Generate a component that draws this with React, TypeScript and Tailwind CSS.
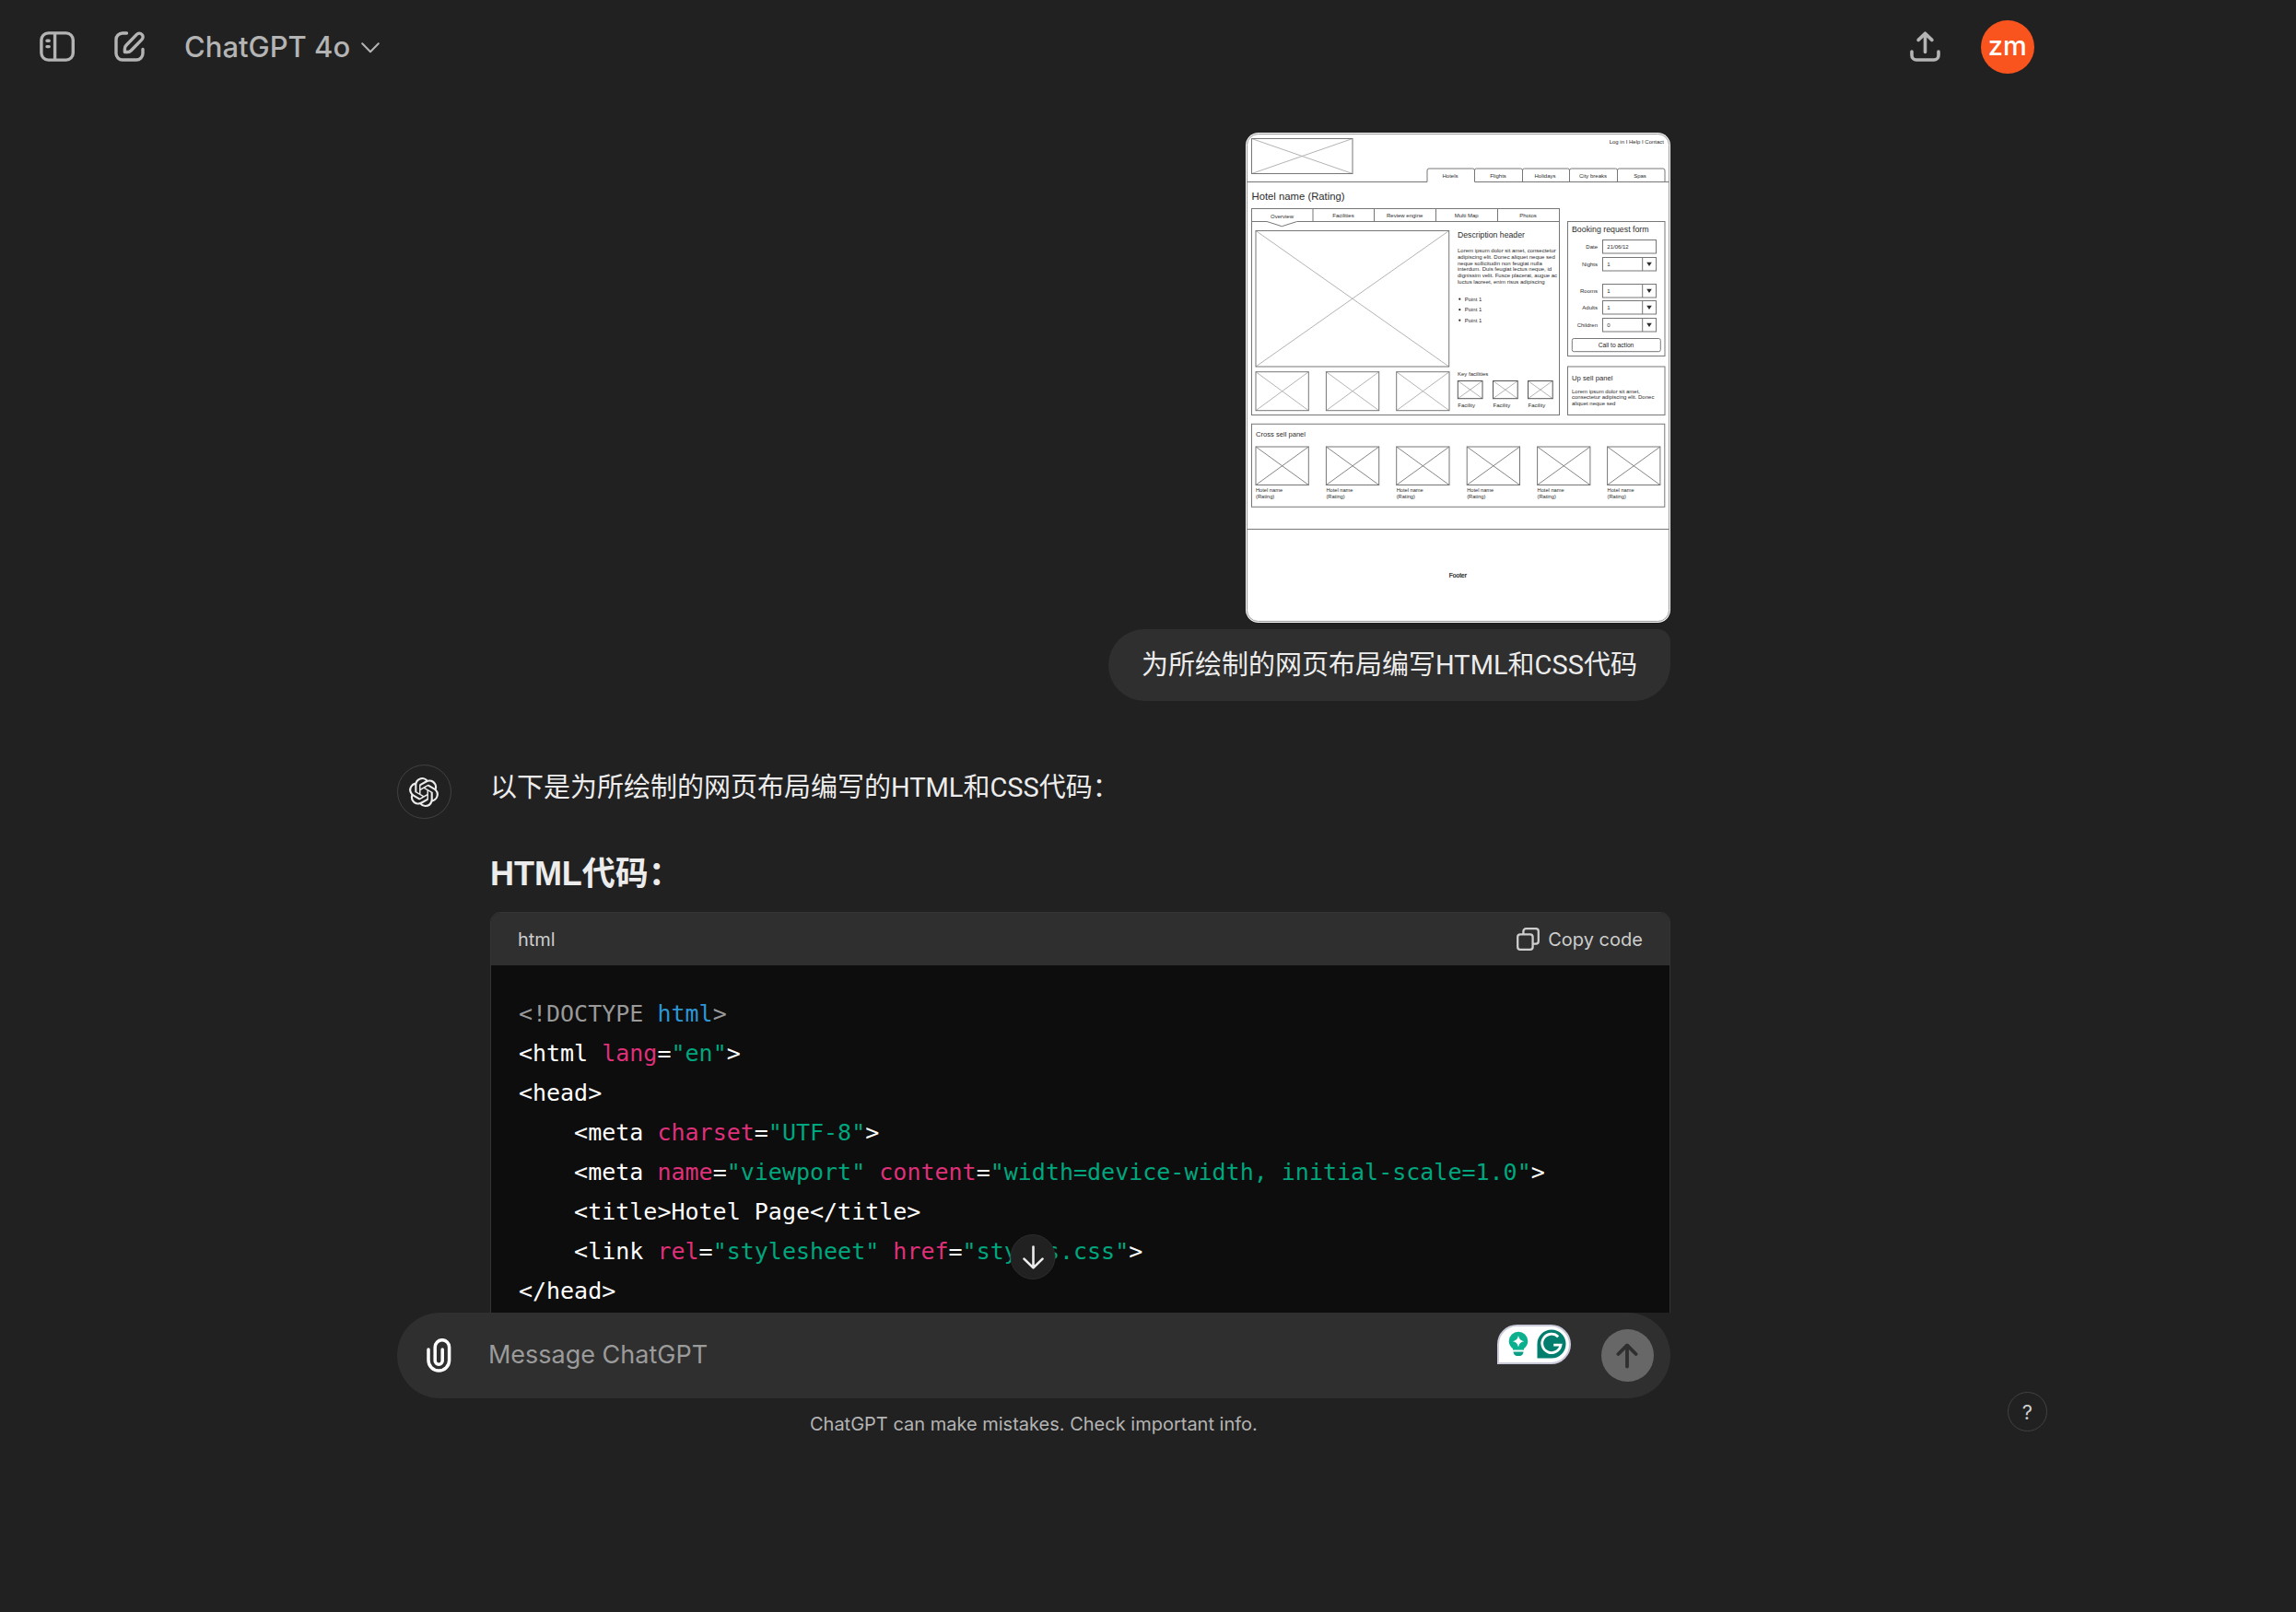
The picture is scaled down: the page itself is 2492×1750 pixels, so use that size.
import type { ReactNode } from "react";
import { SiOpenai } from "react-icons/si";

function SidebarIcon() {
  return (
    <svg width="38" height="33" viewBox="0 0 38 33" fill="none" stroke="currentColor" strokeWidth="3.4" aria-hidden="true">
      <rect x="1.9" y="1.9" width="34.4" height="29.2" rx="7.5" />
      <path d="M16.6 2v29" />
      <path d="M8 10.2h2.2M8 16.6h2.2" strokeLinecap="round" />
    </svg>
  );
}

function NewChatIcon() {
  return (
    <svg width="33" height="33" viewBox="0 0 33 33" fill="none" stroke="currentColor" strokeWidth="3.4" strokeLinecap="round" strokeLinejoin="round" aria-hidden="true">
      <path d="M13.5 2H9a7 7 0 0 0-7 7v15a7 7 0 0 0 7 7h15a7 7 0 0 0 7-7v-4.5" />
      <path d="M11.4 22.5V19c0-1.4.5-2.7 1.5-3.7L24.4 3.4a3.9 3.9 0 0 1 5.6 5.5L18.4 20.8c-1 1-2.3 1.7-3.7 1.7z" />
    </svg>
  );
}

function ChevronIcon() {
  return (
    <svg width="20" height="12" viewBox="0 0 20 12" fill="none" stroke="currentColor" strokeWidth="2" strokeLinecap="round" strokeLinejoin="round" aria-hidden="true">
      <path d="m1.2 1.2 8.8 9 8.8-9" />
    </svg>
  );
}

function ShareIcon() {
  return (
    <svg width="33" height="33" viewBox="0 0 33 33" fill="none" stroke="currentColor" strokeWidth="3.6" strokeLinecap="round" strokeLinejoin="round" aria-hidden="true">
      <path d="M2 22v4a5 5 0 0 0 5 5h19a5 5 0 0 0 5-5v-4" />
      <path d="M16.5 22.5V2.4M9.2 9.4l7.3-7.2 7.3 7.2" />
    </svg>
  );
}

function CopyIcon() {
  return (
    <svg width="25" height="25" viewBox="0 0 25 25" fill="none" stroke="currentColor" strokeWidth="2.3" aria-hidden="true">
      <rect x="1.2" y="7.4" width="16.4" height="16.4" rx="2.8" />
      <path d="M7.4 7V4A2.8 2.8 0 0 1 10.2 1.2H21A2.8 2.8 0 0 1 23.8 4v10.8a2.8 2.8 0 0 1-2.8 2.8h-3" />
    </svg>
  );
}

function ClipIcon() {
  return (
    <svg width="27" height="37" viewBox="0 0 27 37" fill="none" stroke="currentColor" strokeWidth="3.5" strokeLinecap="round" aria-hidden="true">
      <path d="M2 12v11.8a11.3 11.3 0 0 0 22.6 0V9.4a7.7 7.7 0 0 0-15.4 0v14.8a4 4 0 0 0 8 0V12" />
    </svg>
  );
}

function ArrowUpIcon() {
  return (
    <svg width="24" height="28" viewBox="0 0 24 28" fill="none" stroke="currentColor" strokeWidth="3.8" strokeLinecap="round" strokeLinejoin="round" aria-hidden="true">
      <path d="M12 25.6V2.6M2.4 12 12 2.4l9.6 9.6" />
    </svg>
  );
}

function ArrowDownIcon() {
  return (
    <svg width="24" height="26" viewBox="0 0 24 26" fill="none" stroke="currentColor" strokeWidth="2.6" strokeLinecap="round" strokeLinejoin="round" aria-hidden="true">
      <path d="M12 1.5v22.6M2 14.6l10 9.8 10-9.8" />
    </svg>
  );
}

function BulbIcon() {
  return (
    <svg width="22" height="28" viewBox="0 0 22 28" aria-hidden="true">
      <path d="M11 .8A10.3 10.3 0 0 0 .7 11c0 4 2.2 6.3 4.3 8.1v1.5h12v-1.5c2.1-1.8 4.3-4.1 4.3-8.1A10.3 10.3 0 0 0 11 .8z" fill="#0bb08f" />
      <path d="M5.4 22.600h11.200c-.4 2.800-1.900 4.400-3.600 4.400H9c-1.700 0-3.200-1.600-3.600-4.400z" fill="#0b9f86" />
      <path d="M11 4.800c.9 4 2.300 5.500 6.200 6.400-3.900.9-5.300 2.400-6.200 6.400-.9-4-2.300-5.500-6.200-6.400 3.900-.9 5.300-2.400 6.200-6.400z" fill="#fff" />
    </svg>
  );
}

function GrammarBadge() {
  return (
    <svg width="32" height="32" viewBox="0 0 32 32" aria-hidden="true">
      <path d="M16 .5a15.5 15.5 0 1 1 0 31H.5V16A15.5 15.5 0 0 1 16 .5z" fill="#027e6f" />
      <path d="M23.2 8.2A10.2 10.2 0 1 0 26 17.2h-7.800" fill="none" stroke="#fff" strokeWidth="2.8" />
    </svg>
  );
}

function Crossed({ x, y, r, b, line = "#777", diag = "#aaa" }: { x: number; y: number; r: number; b: number; line?: string; diag?: string }) {
  return (
    <g fill="none">
      <path d={`M${x} ${y}L${r} ${b}M${r} ${y}L${x} ${b}`} stroke={diag} strokeWidth="0.9" />
      <rect x={x} y={y} width={r - x} height={b - y} stroke={line} />
    </g>
  );
}

const siteTabs: [string, number][] = [["Hotels", 222], ["Flights", 274], ["Holidays", 325], ["City breaks", 377], ["Spas", 428]];
const pageTabs: [string, number, number][] = [["Overview", 39.5, 92.5], ["Facilities", 106, 91.7], ["Review engine", 172.7, 91.7], ["Multi Map", 239.7, 91.7], ["Photos", 306.5, 91.7]];
const lorem = [
  "Lorem ipsum dolor sit amet, consectetur",
  "adipiscing elit. Donec aliquet neque sed",
  "neque sollicitudin non feugiat nulla",
  "interdum. Duis feugiat lectus neque, id",
  "dignissim velit. Fusce placerat, augue ac",
  "luctus laoreet, enim risus adipiscing",
];
const fields: [string, string, number, boolean][] = [
  ["Date", "21/06/12", 116.5, false],
  ["Nights", "1", 135.5, true],
  ["Rooms", "1", 164.5, true],
  ["Adults", "1", 182.5, true],
  ["Children", "0", 201.5, true],
];
const thumbs = [11, 87.4, 163.7];
const hotels = [11, 87.4, 163.7, 240.2, 316.6, 392.6];

/* Uploaded hotel page wireframe */
function Wireframe() {
  return (
    <svg viewBox="0 0 461 532" className="block w-[461px] rounded-[14px] bg-white" role="img" aria-label="Hotel page wireframe" fontFamily='"Liberation Sans", Arial, sans-serif' fontSize="6" fill="#2c2c2c">
      <g fill="none" stroke="#777">
        <rect x="1.5" y="1.5" width="458" height="529" rx="12" stroke="#999" />
        <path d="M1.5 53.5H197V41q0-2 2-2h47.5q2 0 2 2v12.5h211" />
        <path d="M248.5 41q0-2 2-2h48q2 0 2 2v12.500M300.500 41q0-2 2-2h47q2 0 2 2v12.500M351.500 41q0-2 2-2h48q2 0 2 2v12.500M403.500 41q0-2 2-2H453q2 0 2 2v12.500" />
        <rect x="6.5" y="82.5" width="334" height="224" />
        <path d="M6.5 96.5H23l16.300 5.200 16.400-5.200h284.800M73 82.500v14M139.500 82.500v14M206.500 82.500v14M273.500 82.500v14" />
        <rect x="349.5" y="96.5" width="105.5" height="146" />
        <rect x="354.3" y="223.5" width="96" height="14.2" rx="2" />
        <rect x="349.5" y="254" width="105.5" height="52.5" />
        <rect x="6.5" y="316.3" width="448.3" height="90" />
        <path d="M1.5 430.5h458" />
      </g>

      <Crossed x={6.5} y={6.5} r={116} b={44.5} />
      <text x="454" y="12" textAnchor="end">Log in I Help I Contact</text>
      {siteTabs.map(([label, x]) => (
        <text key={label} x={x} y="48.7" textAnchor="middle">{label}</text>
      ))}
      <text x="6.5" y="72.5" fontSize="11.3">Hotel name (Rating)</text>
      {pageTabs.map(([label, x, y]) => (
        <text key={label} x={x} y={y} textAnchor="middle">{label}</text>
      ))}

      <Crossed x={11} y={106.5} r={220.7} b={254} />
      {thumbs.map((x) => (
        <Crossed key={x} x={x} y={259.7} r={x + 57.3} b={301.7} />
      ))}
      <text x="230" y="114.3" fontSize="8.7">Description header</text>
      {lorem.map((line, i) => (
        <text key={line} x="230" y={130.4 + i * 6.66}>{line}</text>
      ))}
      {[182.7, 194.2, 205.7].map((y) => (
        <g key={y}>
          <circle cx="232.3" cy={y - 2} r="1.1" />
          <text x="237.7" y={y}>Point 1</text>
        </g>
      ))}
      <text x="230" y="264.2">Key facilities</text>
      {[230.3, 268.5, 306.5].map((x) => (
        <g key={x}>
          <Crossed x={x} y={269.5} r={x + 26.7} b={288.7} line="#555" />
          <text x={x} y="297.5">Facility</text>
        </g>
      ))}

      <text x="354" y="107.8" fontSize="8.8">Booking request form</text>
      {fields.map(([label, value, y, dropdown]) => (
        <g key={label}>
          <text x="382" y={y + 9.3} textAnchor="end">{label}</text>
          <rect x="387.5" y={y} width="58" height="14.5" fill="none" stroke="#777" />
          <text x="392.3" y={y + 9}>{value}</text>
          {dropdown && <path d={`M430.7 ${y}v14.5`} stroke="#777" />}
          {dropdown && <path d={`M435.2 ${y + 5.2}h5.6l-2.8 4.2z`} />}
        </g>
      ))}
      <text x="402" y="232.8" textAnchor="middle" fontSize="6.7" fill="#222">Call to action</text>
      <text x="354" y="269.4" fontSize="7.7">Up sell panel</text>
      <text x="354" y="282.7">Lorem ipsum dolor sit amet,</text>
      <text x="354" y="289.4">consectetur adipiscing elit. Donec</text>
      <text x="354" y="296">aliquet neque sed</text>

      <text x="11" y="329.7" fontSize="7.6">Cross sell panel</text>
      {hotels.map((x) => (
        <g key={x}>
          <Crossed x={x} y={341} r={x + 57.3} b={382.5} diag="#777" />
          <text x={x} y="390.2" fontSize="5.7">Hotel name</text>
          <text x={x} y="397" fontSize="5.7">(Rating)</text>
        </g>
      ))}
      <text x="230.3" y="483.2" textAnchor="middle" fontSize="6.7" fill="#111" stroke="#111" strokeWidth="0.2">Footer</text>
    </svg>
  );
}

const Attr = ({ children }: { children: ReactNode }) => <span className="text-[#df3079]">{children}</span>;
const Str = ({ children }: { children: ReactNode }) => <span className="text-[#00a67d]">{children}</span>;

function CodeSample() {
  return (
    <pre className="overflow-hidden bg-[#0d0d0d] px-[30px] pt-[31px] pb-8 font-['DejaVu_Sans_Mono','Liberation_Mono',monospace] text-[25px] leading-[43px] text-white">
      <code className="font-[inherit]">
        <span className="text-[#999]">&lt;!DOCTYPE <span className="text-[#2e95d3]">html</span>&gt;</span>{"\n"}
        &lt;html <Attr>lang</Attr>=<Str>"en"</Str>&gt;{"\n"}
        &lt;head&gt;{"\n"}
        {"    "}&lt;meta <Attr>charset</Attr>=<Str>"UTF-8"</Str>&gt;{"\n"}
        {"    "}&lt;meta <Attr>name</Attr>=<Str>"viewport"</Str> <Attr>content</Attr>=<Str>"width=device-width, initial-scale=1.0"</Str>&gt;{"\n"}
        {"    "}&lt;title&gt;Hotel Page&lt;/title&gt;{"\n"}
        {"    "}&lt;link <Attr>rel</Attr>=<Str>"stylesheet"</Str> <Attr>href</Attr>=<Str>"styles.css"</Str>&gt;{"\n"}
        &lt;/head&gt;{"\n"}
      </code>
    </pre>
  );
}

export default function App() {
  return (
    <div className="min-h-screen bg-[#212121] text-[#ececec]">
      <div className="relative flex h-[90vh] w-[90%] flex-col font-['Inter','Noto_Sans_CJK_SC',sans-serif]">
        <header className="flex h-[101px] shrink-0 items-center justify-between pr-[35px] pl-[43px] text-[#b4b4b4]">
          <div className="flex items-center gap-[43px]">
            <button type="button" aria-label="Open sidebar"><SidebarIcon /></button>
            <button type="button" aria-label="New chat"><NewChatIcon /></button>
            <button type="button" className="flex items-center gap-3 pt-0.5 text-[31px] font-medium">
              ChatGPT 4o
              <ChevronIcon />
            </button>
          </div>
          <div className="flex items-center gap-[44px]">
            <button type="button" aria-label="Share"><ShareIcon /></button>
            <button type="button" aria-label="Account" className="size-[58px] rounded-full bg-[#f9541e] pb-0.5 text-[29px] leading-none font-medium text-white">zm</button>
          </div>
        </header>

        <main className="min-h-0 flex-1 overflow-hidden pt-[43px] pl-px">
          <div className="mx-auto flex max-w-[1382px] flex-col font-['Roboto','Noto_Sans_CJK_SC',sans-serif] text-[29px] leading-[50px]">
            <div className="flex flex-col items-end gap-[7px]">
              <Wireframe />
              <p className="rounded-[39px] rounded-tr-[14px] bg-[#2f2f2f] px-9 py-[14px]">为所绘制的网页布局编写HTML和CSS代码</p>
            </div>
            <article className="mt-[69px] flex gap-[42px]">
              <div className="flex size-[59px] shrink-0 items-center justify-center rounded-full border border-[#424242]">
                <SiOpenai size={32} />
              </div>
              <div className="min-w-0 flex-1">
                <p>以下是为所绘制的网页布局编写的HTML和CSS代码：</p>
                <h3 className="mt-10 font-['Liberation_Sans','Noto_Sans_CJK_SC',sans-serif] text-4xl leading-[58px] font-bold">HTML代码：</h3>
                <section className="mt-3 overflow-hidden rounded-[11px] border border-[#343434]">
                  <div className="flex h-[57px] items-center justify-between bg-[#2f2f2f] px-[29px] font-['Inter',sans-serif] text-xl text-[#cdcdcd]">
                    <span>html</span>
                    <button type="button" className="flex items-center gap-[9px]">
                      <CopyIcon />
                      Copy code
                    </button>
                  </div>
                  <CodeSample />
                </section>
              </div>
            </article>
          </div>
        </main>

        <footer className="relative shrink-0 pl-px">
          <button type="button" aria-label="Scroll to bottom" className="absolute -top-[85px] left-1/2 flex size-[49px] -translate-x-1/2 items-center justify-center rounded-full border border-[#2c2c2c] bg-[#212121]">
            <ArrowDownIcon />
          </button>
          <form className="mx-auto flex h-[93px] max-w-[1382px] items-center rounded-full bg-[#2f2f2f] pr-[18px] pl-8">
            <button type="button" aria-label="Attach file" className="text-white"><ClipIcon /></button>
            <input aria-label="Message ChatGPT" placeholder="Message ChatGPT" className="ml-10 min-w-0 flex-1 bg-transparent text-[27px] outline-none placeholder:text-[#9b9b9b]" />
            <button type="button" aria-label="Writing suggestions" className="mr-[33px] mb-[25px] flex h-[43px] w-20 items-center justify-end gap-[9px] rounded-full rounded-bl-none border-2 border-[#c9cbdb] bg-white pr-[3px]">
              <BulbIcon />
              <GrammarBadge />
            </button>
            <button type="submit" aria-label="Send" className="flex size-[57px] items-center justify-center rounded-full bg-[#676767] text-[#2f2f2f]">
              <ArrowUpIcon />
            </button>
          </form>
          <p className="pt-3 pb-3 text-center text-xl leading-[33px] text-[#b4b4b4]">ChatGPT can make mistakes. Check important info.</p>
        </footer>

        <button type="button" aria-label="Help" className="absolute right-[21px] bottom-[21px] size-[43px] rounded-full border border-[#424242] text-[22px] leading-none text-[#cdcdcd]">?</button>
      </div>
    </div>
  );
}
